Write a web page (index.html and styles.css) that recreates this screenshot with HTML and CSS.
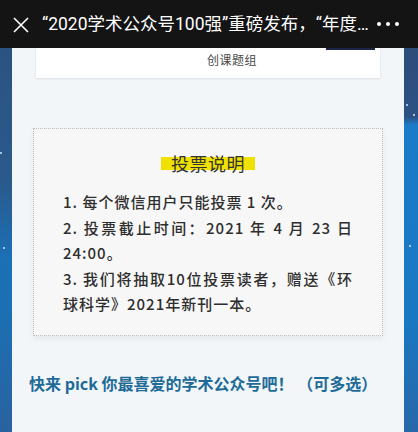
FILE: index.html
```html
<!DOCTYPE html>
<html lang="zh-CN">
<head>
<meta charset="utf-8">
<link rel="stylesheet" href="styles.css">
</head>
<body>
<header class="topbar">
  <svg class="close" width="16" height="16" viewBox="0 0 16 16"><path d="M1 1L15 15M15 1L1 15" stroke="#fff" stroke-width="1.6" fill="none"/></svg>
  <div class="title">“2020学术公众号100强”重磅发布，“年度…</div>
  <div class="more"><span></span><span></span><span></span></div>
</header>
<div class="stage">
  <div class="side side-left"><i class="star s1"></i><i class="star s2"></i></div>
  <main class="panel">
    <div class="card">
      <div class="card-tab"></div>
      <div class="card-text">创课题组</div>
    </div>
    <section class="notice">
      <h2 class="notice-title"><span class="mark">投票说明</span></h2>
      <div class="notice-body">
        <p>1. 每个微信用户只能投票 1 次。</p>
        <p>2. 投票截止时间：2021 年 4 月 23 日 24:00。</p>
        <p>3. 我们将抽取10位投票读者，赠送《环球科学》2021年新刊一本。</p>
      </div>
    </section>
    <p class="cta">快来 pick 你最喜爱的学术公众号吧！ （可多选）</p>
  </main>
  <div class="side side-right"><i class="star s3"></i><i class="star s4"></i><i class="star s5"></i></div>
</div>
</body>
</html>
```
FILE: styles.css
```css
html, body {
  margin: 0;
  padding: 0;
}
body {
  width: 418px;
  height: 432px;
  overflow: hidden;
  font-family: "Noto Sans CJK SC", "Noto Sans", sans-serif;
  background: #f2f6f9;
}
.topbar {
  height: 48px;
  background: #141414;
  display: flex;
  align-items: center;
  padding: 0 0 0 13px;
  box-sizing: border-box;
}
.close {
  flex: none;
  width: 16px;
  height: 16px;
  margin-top: 1px;
}
.title {
  flex: 1;
  min-width: 0;
  margin-left: 13px;
  color: #fff;
  font-family: Roboto, "Noto Sans CJK SC", sans-serif;
  font-size: 17.5px;
  line-height: 24px;
  white-space: nowrap;
}
.more {
  flex: none;
  width: 46px;
  display: flex;
  gap: 5px;
  padding-left: 5px;
  box-sizing: border-box;
}
.more span {
  width: 4px;
  height: 4px;
  border-radius: 50%;
  background: #fff;
}
.stage {
  display: flex;
  height: 384px;
}
.side {
  flex: none;
  position: relative;
}
.side-left {
  width: 12px;
  background: linear-gradient(180deg, #2b5381 0%, #2a5a8c 35%, #1b70b6 55%, #1c6fb2 70%, #2a62a0 100%);
}
.side-right {
  width: 14px;
  background: linear-gradient(180deg, #2d4d7a 0%, #2c5284 18%, #1a7bc8 20%, #1a78c2 70%, #2768a8 100%);
}
.star {
  position: absolute;
  width: 2px;
  height: 2px;
  border-radius: 50%;
  background: #cfe6ff;
}
.s1 { left: 0; top: 104px; }
.s2 { left: 3px; top: 199px; }
.s3 { left: 2px; top: 56px; }
.s4 { left: 9px; top: 66px; }
.s5 { left: 5px; top: 197px; }
.panel {
  flex: 1;
  display: flex;
  flex-direction: column;
  background: #f2f6f9;
}
.card {
  margin: 0 24px;
  height: 30px;
  background: #fff;
  box-shadow: 0 1px 2px rgba(0,0,0,0.10);
  display: flex;
  flex-direction: column;
}
.card-tab {
  align-self: flex-end;
  width: 49px;
  height: 2px;
  margin-right: 5px;
  background: #1c2448;
}
.card-text {
  padding-left: 48px;
  text-align: center;
  font-size: 12px;
  letter-spacing: 0.5px;
  line-height: 20px;
  color: #4a4a4a;
}
.notice {
  margin: 50px 21px 0;
  height: 208px;
  box-sizing: border-box;
  border: 1px dotted #bdbdbd;
  background: #f7f7f7;
  box-shadow: 0 3px 5px rgba(0,0,0,0.06);
  padding: 25px 29px 0 29px;
}
.notice-title {
  margin: 0;
  text-align: center;
  font-size: 18px;
  line-height: 18px;
  font-weight: 400;
  color: #333;
}
.mark {
  display: inline-block;
  padding: 0 10px;
  letter-spacing: 0.5px;
  background: linear-gradient(180deg, transparent 3px, #f1e100 3px, #f1e100 16px, transparent 16px);
}
.notice-body {
  margin-top: 17px;
  font-size: 15px;
  line-height: 25.5px;
  font-weight: 500;
  color: #2e2e2e;
  letter-spacing: 1px;
  text-align: justify;
}
.notice-body p {
  margin: 0;
}
.cta {
  margin: 35px 0 0 17px;
  font-size: 16px;
  line-height: 24px;
  font-weight: 700;
  color: #1e6b97;
  white-space: nowrap;
}
```
